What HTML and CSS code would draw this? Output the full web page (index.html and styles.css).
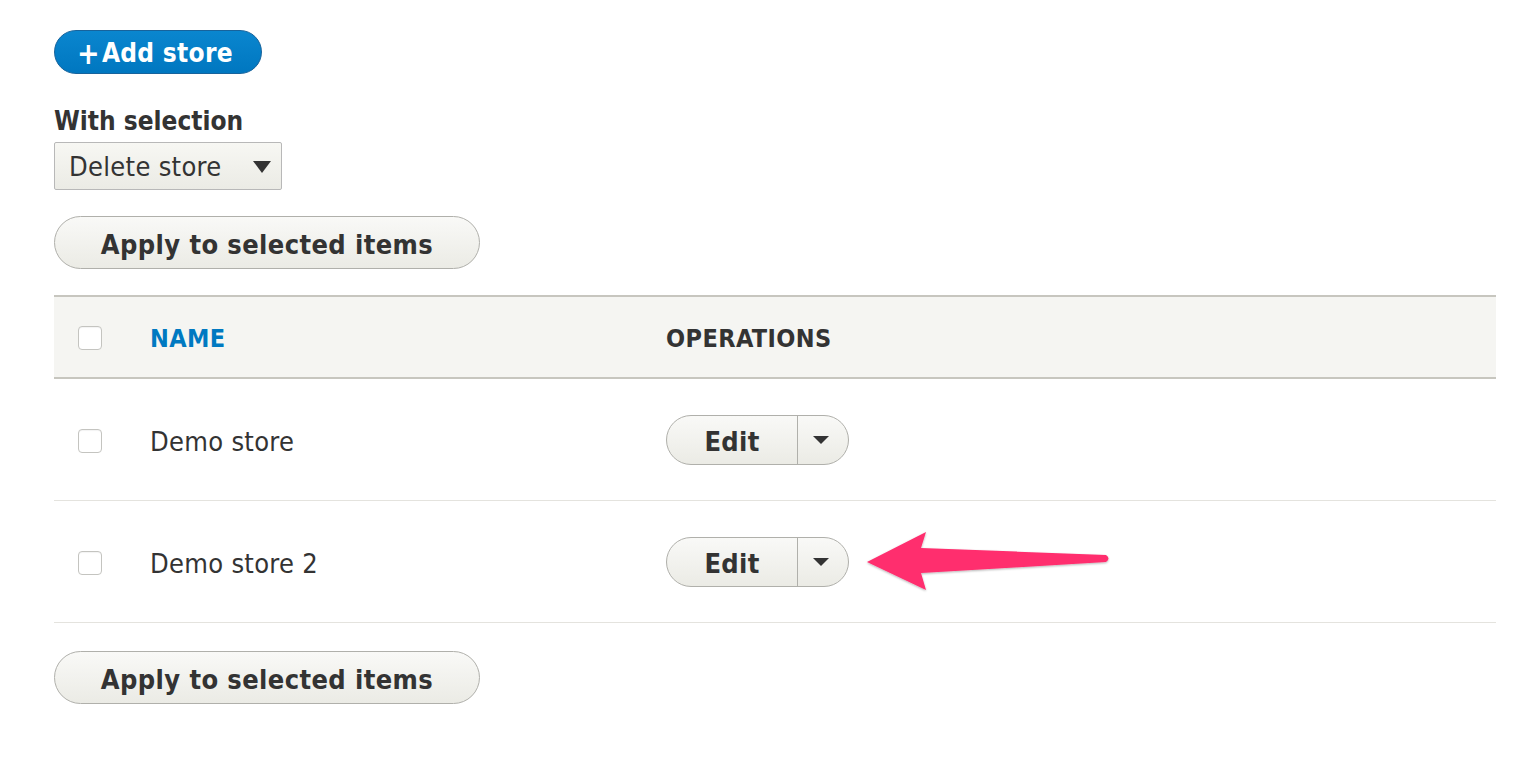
FILE: index.html
```html
<!DOCTYPE html>
<html>
<head>
<meta charset="utf-8">
<link rel="stylesheet" href="styles.css">
</head>
<body>
<div class="page">
  <div class="actions-top">
    <a class="btn-primary"><span class="plus">+</span>Add store</a>
  </div>
  <div class="bulk">
    <label class="bulk-label">With selection</label>
    <div class="select"><span>Delete store</span><span class="caret"></span></div>
    <button class="btn">Apply to selected items</button>
  </div>
  <table class="list">
    <thead>
      <tr>
        <th class="c-check"><span class="checkbox"></span></th>
        <th class="c-name"><a class="sort">NAME</a></th>
        <th class="c-ops">OPERATIONS</th>
      </tr>
    </thead>
    <tbody>
      <tr>
        <td class="c-check"><span class="checkbox"></span></td>
        <td class="c-name">Demo store</td>
        <td class="c-ops">
          <div class="dropbutton"><span class="db-main">Edit</span><span class="db-toggle"><span class="tri"></span></span></div>
        </td>
      </tr>
      <tr>
        <td class="c-check"><span class="checkbox"></span></td>
        <td class="c-name">Demo store 2</td>
        <td class="c-ops">
          <div class="dropbutton"><span class="db-main">Edit</span><span class="db-toggle"><span class="tri"></span></span></div>
        </td>
      </tr>
    </tbody>
  </table>
  <div class="bottom">
    <button class="btn">Apply to selected items</button>
  </div>
</div>
<svg class="arrow" width="260" height="80" viewBox="850 520 260 80">
  <defs>
    <filter id="sh" x="-10%" y="-30%" width="120%" height="160%">
      <feDropShadow dx="0" dy="1" stdDeviation="1.2" flood-color="#000" flood-opacity="0.3"/>
    </filter>
  </defs>
  <path filter="url(#sh)" fill="#ff2d6e" d="M867,562 L926,532 L921,548 L1106,555 Q1111,558.5 1106,562 L921,573 L926,590 Z"/>
</svg>
</body>
</html>
```
FILE: styles.css
```css
html, body {
  margin: 0;
  padding: 0;
  background: #fff;
}
body {
  font-family: "DejaVu Sans Condensed", "DejaVu Sans", sans-serif;
  color: #333;
  font-size: 28px;
}
.page {
  padding: 30px 34px 0 54px;
}
.actions-top {
  display: flex;
  height: 44px;
}
.btn-primary {
  display: flex;
  align-items: center;
  box-sizing: border-box;
  height: 44px;
  width: 208px;
  padding: 2px 0 0 22px;
  border-radius: 22px;
  border: 1px solid #17639c;
  background: linear-gradient(#0a86cf, #0077c0);
  color: #fff;
  font-weight: bold;
  font-size: 26px;
  letter-spacing: 0.3px;
}
.plus {
  font-size: 30px;
  margin-right: 2px;
}
.bulk {
  display: flex;
  flex-direction: column;
  align-items: flex-start;
  padding-top: 30px;
}
.bulk-label {
  font-weight: bold;
  font-size: 26px;
  line-height: 34px;
  height: 38px;
}
.select {
  box-sizing: border-box;
  height: 48px;
  width: 228px;
  border: 1px solid #b8b8b8;
  border-radius: 2px;
  background: linear-gradient(#f7f7f3, #ebebe5);
  display: flex;
  align-items: center;
  justify-content: space-between;
  padding: 0 10px 0 14px;
  font-size: 27px;
  letter-spacing: 0.3px;
}
.caret {
  width: 0;
  height: 0;
  border-left: 9px solid transparent;
  border-right: 9px solid transparent;
  border-top: 12px solid #333;
  margin-top: 2px;
}
.btn {
  box-sizing: border-box;
  margin-top: 26px;
  height: 53px;
  width: 426px;
  border: 1px solid #b0b0ab;
  border-radius: 27px;
  background: linear-gradient(#f9f9f7, #ebebe5);
  font-family: inherit;
  font-weight: bold;
  font-size: 27px;
  color: #333;
  letter-spacing: 0.4px;
  padding: 3px 0 0 0;
}
.list {
  margin-top: 26px;
  width: 1442px;
  border-collapse: collapse;
}
.list thead tr {
  background: #f5f5f2;
  border-top: 2px solid #c7c6bf;
  border-bottom: 2px solid #c7c6bf;
}
.list th {
  height: 77px;
  text-align: left;
  font-weight: bold;
  font-size: 25px;
  letter-spacing: 0.4px;
  padding: 3px 0 0 0;
  vertical-align: middle;
}
.list td {
  height: 121px;
  padding: 0;
  vertical-align: middle;
  font-size: 27px;
  letter-spacing: 0.3px;
}
.list td.c-name {
  padding-top: 4px;
  height: 117px;
}
.list tbody tr {
  border-bottom: 1px solid #e4e3de;
}
.c-check {
  width: 96px;
  padding-left: 0;
}
.c-name {
  width: 516px;
}
.list th.c-check {
  padding-top: 0;
}
.checkbox {
  display: block;
  box-sizing: border-box;
  width: 24px;
  height: 24px;
  margin-left: 24px;
  margin-top: 2px;
  border: 1px solid #c4c4c0;
  border-radius: 4px;
  background: #fff;
  box-shadow: inset 0 1px 1px rgba(0,0,0,0.05);
}
.sort {
  color: #0079c1;
}
.dropbutton {
  display: flex;
  box-sizing: border-box;
  width: 183px;
  height: 50px;
  border: 1px solid #b0b0ab;
  border-radius: 25px;
  background: linear-gradient(#f9f9f7, #ebebe5);
  margin-top: 1px;
}
.db-main {
  width: 130px;
  display: flex;
  align-items: center;
  justify-content: center;
  font-weight: bold;
  font-size: 27px;
  padding-top: 3px;
  border-right: 1px solid #b0b0ab;
}
.db-toggle {
  flex: 1;
  display: flex;
  align-items: center;
  justify-content: center;
  padding-right: 4px;
}
.tri {
  width: 0;
  height: 0;
  border-left: 8px solid transparent;
  border-right: 8px solid transparent;
  border-top: 8px solid #333;
}
.bottom {
  display: flex;
  padding-top: 2px;
}
.arrow {
  position: absolute;
  left: 850px;
  top: 520px;
}
```
